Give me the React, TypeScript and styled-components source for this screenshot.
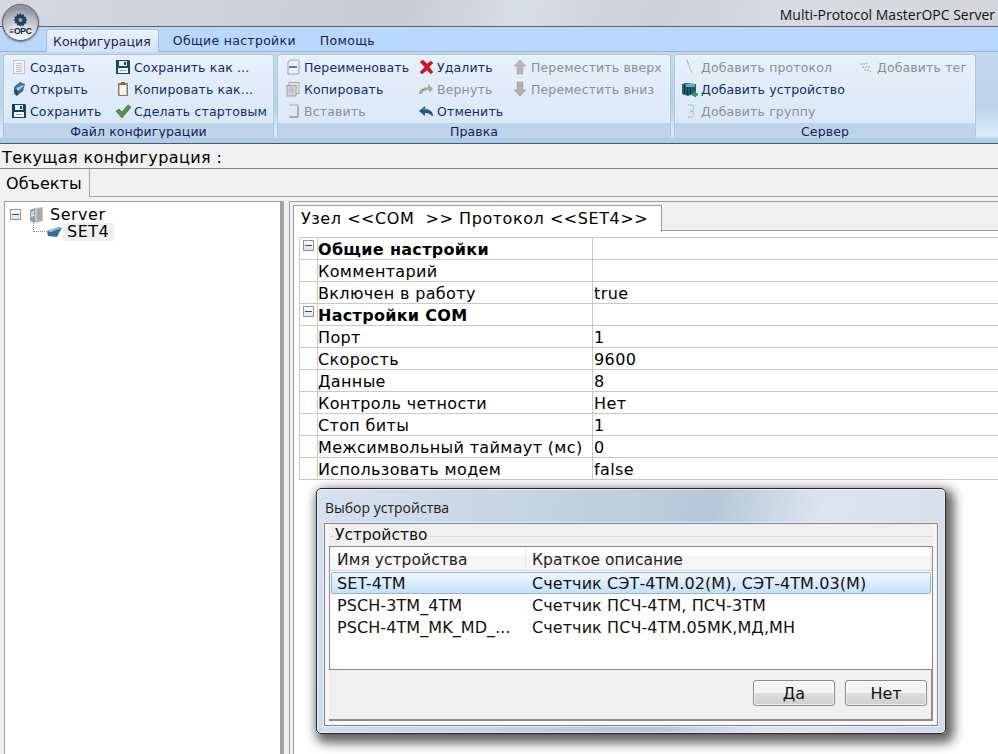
import React from "react";
import styled, { createGlobalStyle } from "styled-components";

const Global = createGlobalStyle`
  html, body { margin: 0; padding: 0; width: 998px; height: 754px; overflow: hidden; background: #f0f0f0; }
  #root { width: 998px; height: 754px; }
  * { box-sizing: border-box; }
`;

const FONT = `"DejaVu Sans", Verdana, sans-serif`;

const Page = styled.div`
  position: relative; width: 998px; height: 754px; overflow: hidden;
  display: flex; flex-direction: column; font-family: ${FONT}; color: #000;
`;
const TitleBar = styled.div`
  height: 27px; flex: none; display: flex; align-items: center; justify-content: flex-end; padding: 2px 3px 0 0;
  background: linear-gradient(105deg, #d6d9df 0%, #c9ccd2 40%, #d9dde4 52%, #cdd0d6 66%, #d8dbe1 78%, #d3d5da 100%);
  border-bottom: 1px solid #5d6068;
`;
const TitleText = styled.span`
  font-family: "Open Sans", sans-serif; font-size: 14px; color: #111; letter-spacing: 0;
`;
const Logo = styled.div`
  position: absolute; left: 2px; top: 4px; width: 37px; height: 37px; border-radius: 50%;
  background: radial-gradient(circle at 50% 100%, #ffffff 0%, #e6e9ee 30%, #b3b9c4 62%, #8b93a0 82%, #b9bec8 100%);
  border: 1px solid #59606b; box-shadow: 0 1px 2px rgba(0,0,0,.45);
  display: flex; flex-direction: column; align-items: center; padding-top: 8px; z-index: 3;
`;
const LogoText = styled.span`
  font-family: "Liberation Sans", sans-serif; font-weight: 700; font-size: 8.5px; line-height: 8px; color: #0d1a2c; letter-spacing: -.2px; margin-top: 0;
`;
const TabBar = styled.div`
  height: 25px; flex: none; display: flex; align-items: flex-end; padding-left: 46px;
  background: #bad7fc; border-bottom: 1px solid #8fb2d6;
`;
const RibbonTab = styled.div<{ $active?: boolean; $gap: number }>`
  height: ${p => (p.$active ? "23px" : "22px")}; display: flex; align-items: center;
  padding: 1px 7px 0 ${p => (p.$active ? "6px" : "7px")}; margin-right: ${p => p.$gap}px; font-size: 12.5px; color: #15234f; letter-spacing: ${p => (p.$active ? ".05px" : ".3px")};
  ${p => p.$active ? `
    background: linear-gradient(#e9f2fd, #d3e3f6); border: 1px solid #9fc2e6; border-bottom: none;
    border-radius: 3px 3px 0 0; margin-bottom: -1px; color: #1b2350; box-shadow: inset 0 1px 0 #fff;
  ` : ""}
`;
const RibbonBody = styled.div`
  height: 92px; flex: none; display: flex; gap: 3px; padding: 2px 0 0 3px;
  background: linear-gradient(#c5d9ef 0%, #bdd3ea 60%, #dcedfb 92%, #a9cfe9 96%, #a9cfe9 100%);
  border-bottom: 1px solid #55585e;
`;
const Group = styled.div<{ $w: number }>`
  width: ${p => p.$w}px; height: 85px; display: flex; flex-direction: column; overflow: hidden;
  border: 1px solid #a8c6e4; border-radius: 3px;
  background: linear-gradient(#e7f0fb, #d7e6f6);
  box-shadow: inset 0 0 0 1px rgba(255,255,255,.35);
`;
const GroupGrid = styled.div<{ $cols: string }>`
  flex: 1; display: grid; grid-template-columns: ${p => p.$cols}; grid-template-rows: repeat(3, 22px);
  grid-auto-flow: column; padding: 1px 0 0 7px;
`;
const Item = styled.div<{ $off?: boolean }>`
  display: flex; align-items: center; gap: 3px; font-size: 12.5px; letter-spacing: .14px; white-space: nowrap;
  color: ${p => (p.$off ? "#8c8f94" : "#142a6c")};
`;
const GroupLabel = styled.div`
  height: 15px; flex: none; background: #bdd4ec; display: flex; align-items: center; justify-content: center; padding-top: 1px;
  font-size: 12.5px; letter-spacing: .1px; color: #12224f;
`;
const IconBox = styled.svg`
  width: 16px; height: 16px; flex: none; display: block;
`;
const CurrentRow = styled.div`
  height: 25px; flex: none; display: flex; align-items: center; padding: 2px 0 0 2px;
  font-size: 16px; letter-spacing: .4px; background: #f0f0f0; border-bottom: 1px solid #82868c;
`;
const OuterTabs = styled.div`
  height: 28px; flex: none; display: flex; align-items: flex-end; background: #f0f0f0; border-bottom: 1px solid #a3a3a3;
`;
const OuterTab = styled.div`
  width: 90px; height: 28px; padding: 1px 0 0 6px; display: flex; align-items: center; font-size: 16px; letter-spacing: .05px;
  background: #f1f1f1; border-right: 1px solid #a3a3a3; margin-bottom: -1px;
`;
const Main = styled.div`
  flex: 1; min-height: 0; display: flex; padding: 4px 0 0 4px; background: #f0f0f0;
`;
const TreePanel = styled.div`
  width: 278px; flex: none; background: #fff; border: 1px solid #a0a0a0; border-bottom: none; border-right-width: 2px;
  padding: 4px 0 0 5px;
`;
const TreeRow = styled.div<{ $indent?: number }>`
  height: 17px; display: flex; align-items: center; padding-left: ${p => p.$indent ?? 0}px;
`;
const Expander = styled.span`
  width: 11px; height: 11px; flex: none; border: 1px solid #8f949b; display: flex; align-items: center; justify-content: center;
  background: linear-gradient(#fff, #dfe3e8);
  &::after { content: ""; width: 7px; height: 1px; background: #2a4a85; }
`;
const TreeSpacer = styled.span`
  width: 8px; flex: none;
`;
const TreeText = styled.span<{ $sel?: boolean }>`
  font-size: 16px; line-height: 18px; height: 18px; letter-spacing: .5px; padding: 0 ${p => (p.$sel ? "5px" : "2px")} 0 ${p => (p.$sel ? "4px" : "6px")};
  background: ${p => (p.$sel ? "#f0f0f0" : "transparent")};
`;
const Connector = styled.span`
  width: 12px; height: 9px; flex: none; margin: -8px 1px 0 0; border-left: 1px dotted #8a8a8a; border-bottom: 1px dotted #8a8a8a;
`;
const Splitter = styled.div`
  width: 7px; flex: none; background: #f0f0f0; border-left: 2px solid #a7a7a7;
`;
const RightPanel = styled.div`
  flex: 1; min-width: 0; border-left: 1px solid #a0a0a0; border-top: 1px solid #a0a0a0; padding: 0 0 0 3px; background: #f0f0f0;
  display: flex; flex-direction: column;
`;
const NodeTabs = styled.div`
  height: 29px; flex: none; display: flex; align-items: flex-end; padding-top: 1px;
`;
const NodeTab = styled.div`
  width: 369px; height: 27px; display: flex; align-items: center; padding: 0 0 2px 7px; background: #fff; font-size: 16px;
  letter-spacing: .55px; white-space: pre; border: 1px solid #9c9c9c; border-bottom: none; position: relative; margin-bottom: -1px;
`;
const NodeRest = styled.div`
  flex: 1; height: 1px; background: #9c9c9c;
`;
const NodePage = styled.div`
  flex: 1; background: #fff; border-left: 1px solid #9c9c9c; padding: 6px 0 0 5px;
`;
const GridTable = styled.div`
  display: grid; grid-template-columns: 17px 276px 1fr; border-top: 1px solid #c9c9c9; border-left: 1px solid #c9c9c9;
`;
const Gutter = styled.div`
  height: 22px; border-bottom: 1px solid #c9c9c9; display: flex; justify-content: center; padding-top: 2px; background: #fff;
`;
const NameCell = styled.div<{ $bold?: boolean }>`
  height: 22px; display: flex; align-items: center; padding: 1px 0 0 0; font-size: 16px; letter-spacing: ${p => (p.$bold ? ".3px" : ".35px")}; white-space: nowrap;
  font-weight: ${p => (p.$bold ? 700 : 400)}; border-left: 1px solid #c9c9c9; border-bottom: 1px solid #c9c9c9; border-right: 1px solid #c9c9c9;
`;
const ValueCell = styled.div`
  height: 22px; display: flex; align-items: center; padding: 1px 0 0 1px; font-size: 16px; letter-spacing: .4px; border-bottom: 1px solid #c9c9c9;
`;
const Dialog = styled.div`
  position: absolute; left: 316px; top: 488px; width: 630px; height: 246px; z-index: 5; padding: 0 7px 7px;
  border-radius: 5px; border: 1px solid #23262b; display: flex; flex-direction: column;
  background: linear-gradient(105deg, #d6e2ee 0%, #c6d5e4 30%, #b6c8d8 58%, #dce6f0 74%, #d0dce8 100%);
  box-shadow: 4px 5px 11px 4px rgba(0,0,0,.62), inset 0 0 0 1px rgba(255,255,255,.55);
`;
const DialogTitle = styled.div`
  height: 34px; flex: none; display: flex; align-items: center; padding: 2px 0 0 1px;
  font-family: "Open Sans", sans-serif; font-size: 14px; color: #1c1c1c;
`;
const DialogClient = styled.div`
  flex: 1; min-height: 0; background: #f7f7f7; border: 1px solid #7f8489; padding: 0 4px 4px 4px;
  display: flex; flex-direction: column; box-shadow: 0 0 0 1px rgba(255,255,255,.5);
`;
const DialogInner = styled.div`
  flex: 1; min-height: 0; display: flex; flex-direction: column; background: #f0f0f0;
  border-bottom: 2px solid #8c8c8c;
`;
const FieldSet = styled.div`
  position: relative; height: 134px; flex: none; border-top: 1px solid #dcdcdc; border-radius: 2px; padding: 9px 0 0 0; margin-top: 12px;
`;
const Legend = styled.span`
  position: absolute; left: 5px; top: -11px; padding: 0 1px; font-size: 15.5px; line-height: 18px; background: #f0f0f0; color: #111;
`;
const ListBox = styled.div`
  height: 124px; background: #fff; border: 1px solid #828790; display: flex; flex-direction: column;
`;
const ListHead = styled.div`
  height: 24px; flex: none; display: grid; grid-template-columns: 195px 1fr; padding: 0 1px; margin-bottom: 1px;
  background: linear-gradient(#fff 0 40%, #f5f6f7 40% 100%); border-bottom: 1px solid #d5d5d5;
`;
const HeadCell = styled.div`
  display: flex; align-items: center; padding: 3px 0 0 6px; font-size: 15.5px; letter-spacing: .05px; color: #222; border-right: 1px solid #e3e4e6;
`;
const ListRow = styled.div<{ $sel?: boolean }>`
  height: 22px; margin: 0 1px; display: grid; grid-template-columns: 195px 1fr; align-items: center; flex: none; border-radius: 2px;
  ${p => p.$sel ? `background: linear-gradient(#f1f8fe, #c4dffb); box-shadow: inset 0 0 0 1px #8db6e4;` : ""}
`;
const ListCell = styled.div`
  padding-left: 6px; font-size: 16px; letter-spacing: .08px; white-space: nowrap; color: #111;
`;
const DialogFoot = styled.div`
  flex: 1; display: flex; justify-content: flex-end; gap: 10px; padding: 10px 4px 0 0; border-right: 2px solid #8c8c8c;
`;
const Btn = styled.div`
  width: 82px; height: 26px; display: flex; align-items: center; justify-content: center; font-size: 16px; color: #111;
  border: 1px solid #8a8a8a; border-radius: 3px; background: linear-gradient(#f3f3f3 0 48%, #dcdcdc 52%, #cfcfcf 100%);
  box-shadow: inset 0 0 0 1px rgba(255,255,255,.7);
`;

type IconName = "create"|"open"|"save"|"saveas"|"clip"|"check"|"rename"|"copy"|"paste"|"del"|"redo"|"undo"|"up"|"down"|"proto"|"tag"|"device"|"group";

const Floppy = ({ body }: { body: string }) => (
  <>
    <path d="M1 1h13l1 1v13H1z" fill={body}/>
    <rect x="4" y="2" width="8" height="5" fill="#e6ecf0"/>
    <rect x="9" y="3" width="2" height="3" fill={body}/>
    <rect x="3" y="9" width="10" height="5" fill="#f5f5f5"/>
    <rect x="5" y="11" width="6" height="1" fill="#9aa6ad"/>
    <rect x="1" y="14" width="14" height="1" fill={body}/>
  </>
);

const Icon = ({ n }: { n: IconName }) => {
  const c: Record<IconName, React.ReactNode> = {
    create: <><rect x="2.5" y="1.5" width="11" height="13" fill="#f1f3f4" stroke="#c2c6c7"/><path d="M5 4.5h6M5 6.5h6M5 8.5h6M5 10.5h6M5 12.5h6" stroke="#bcc4c2"/></>,
    open: <><path d="M3 6l6-5 5 2-2 7-6 5-3-2z" fill="#3c6f94"/><path d="M5 7l7-3 1 1-6 5z" fill="#9cc8e2"/><path d="M3 9l3 6 1-5z" fill="#25445e"/></>,
    save: <Floppy body="#14405f"/>,
    saveas: <Floppy body="#174764"/>,
    clip: <><rect x="3" y="2" width="10" height="13" rx="1" fill="#9b7450"/><rect x="4.5" y="4" width="7" height="10" fill="#f7f6f2"/><rect x="6" y="1" width="4" height="3" fill="#6e6e6e"/></>,
    check: <><path d="M1 8l3-2 3 3 6-7 3 2-9 11z" fill="#55923f" stroke="#2f6128" strokeWidth=".6"/></>,
    rename: <><path d="M3 3l3-2h7a1 1 0 011 1v12a1 1 0 01-1 1H3z" fill="#eef1f3" stroke="#9ba3a6"/><rect x="4" y="7" width="8" height="2" fill="#3d83b5"/></>,
    copy: <><rect x="4" y="1.5" width="10" height="11" fill="#e2e2e2" stroke="#a8a8a8"/><rect x="2" y="4.5" width="9" height="10.5" fill="#d5d5d5" stroke="#a0a0a0"/><path d="M4 7h5M4 9h5M4 11h5" stroke="#b0b0b0"/></>,
    paste: <><path d="M4 2h9v12H4" fill="none" stroke="#bfbfbf" strokeWidth="1.5"/><path d="M5 14h8M13 3v11" stroke="#a5a5a5" strokeWidth="1.5"/></>,
    del: <><path d="M2 3l3-2 4 4 4-3 2 2-4 4 4 5-2 2-4-4-5 4-2-2 5-5z" fill="#d9101a" stroke="#8a0d12" strokeWidth=".4"/></>,
    redo: <><path d="M1 13c0-5 4-7 9-7V3l5 5-4 4V9c-4 0-6 1-7 4z" fill="#a6a6a6"/><path d="M3 9c2-2 4-2 7-2" stroke="#e8e8e8"/></>,
    undo: <><path d="M15 13c0-5-4-7-8-7V3L1 8l6 5V10c4 0 5 1 7 3z" fill="#1e5a86"/><path d="M5 6h4" stroke="#58a0c8"/></>,
    up: <><path d="M8 1l6 6h-3v8H5V7H2z" fill="#b8b8b8" stroke="#9a9a9a" strokeWidth=".5"/></>,
    down: <><path d="M8 15l6-6h-3V1H5v8H2z" fill="#b0b0b0" stroke="#8f8f8f" strokeWidth=".5"/></>,
    proto: <><path d="M5 1l2 5 1 5 3 3" fill="none" stroke="#9a9a9a" strokeDasharray="1.5 1"/><path d="M5 2l1 4" stroke="#c6c6c6"/></>,
    tag: <><path d="M2 5h6l2-2M4 8h9M6 11h5l2 2" fill="none" stroke="#a5a5a5" strokeDasharray="2 1"/></>,
    device: <><path d="M0 3l4-1 10 1v9l-8 3-6-2z" fill="#1d5f78"/><path d="M4 3h9v3H4z" fill="#6aaac0"/><path d="M2.5 5v8M5.5 6v8M8.5 6v7" stroke="#0c2f3f"/><path d="M10 13.5h6M13 10.5v6" stroke="#2e9b58" strokeWidth="2.4"/></>,
    group: <><path d="M6 2h5l1 3-2 3 2 3-2 3H6" fill="none" stroke="#a0a0a0" strokeDasharray="1.5 1.2"/><path d="M8 8h4" stroke="#bbb"/></>,
  };
  return <IconBox viewBox="0 0 16 16">{c[n]}</IconBox>;
};

const Gear = () => (
  <svg width="15" height="14" viewBox="0 0 16 15">
    <path d="M8 0l1.2 2.2 2.3-.8.4 2.4 2.4.4-.8 2.3L16 7.5l-2.2 1.2.8 2.3-2.4.4-.4 2.4-2.3-.8L8 15l-1.2-2.2-2.3.8-.4-2.4-2.4-.4.8-2.3L0 7.5l2.2-1.2-.8-2.3 2.4-.4.4-2.4 2.3.8z" fill="#22405f"/>
    <circle cx="8" cy="7.5" r="2.2" fill="#8ea7bd"/>
  </svg>
);
const ServerIcon = () => (
  <svg width="15" height="18" viewBox="0 0 15 18"><path d="M1 4l5-2v15l-5-2z" fill="#88a0ae"/><path d="M6 2l8-1v14l-8 2z" fill="#c9c9c9"/><path d="M2 6l3-1v2l-3 1zM2 9l3-1v2l-3 1z" fill="#e6eef2"/><path d="M8 3l5-1v13l-5 1z" fill="#a8a8a8"/></svg>
);
const SetIcon = () => (
  <svg width="17" height="12" viewBox="0 0 17 12"><path d="M1 5l12-4 3 1-2 3-3 6-9-1z" fill="#2d6f96"/><path d="M1 5l12-4 3 1-11 4z" fill="#8fc0dc"/></svg>
);

const groups: { w: number; cols: string; label: string; items: [IconName, string, boolean?][] }[] = [
  { w: 271, cols: "104px 1fr", label: "Файл конфигурации", items: [
    ["create", "Создать"], ["open", "Открыть"], ["save", "Сохранить"],
    ["saveas", "Сохранить как ..."], ["clip", "Копировать как..."], ["check", "Сделать стартовым"],
  ]},
  { w: 394, cols: "133px 94px 1fr", label: "Правка", items: [
    ["rename", "Переименовать"], ["copy", "Копировать"], ["paste", "Вставить", true],
    ["del", "Удалить"], ["redo", "Вернуть", true], ["undo", "Отменить"],
    ["up", "Переместить вверх", true], ["down", "Переместить вниз", true],
  ]},
  { w: 302, cols: "176px 1fr", label: "Сервер", items: [
    ["proto", "Добавить протокол", true], ["device", "Добавить устройство"], ["group", "Добавить группу", true],
    ["tag", "Добавить тег", true],
  ]},
];

const props: [string, string, boolean?][] = [
  ["Общие настройки", "", true], ["Комментарий", ""], ["Включен в работу", "true"],
  ["Настройки COM", "", true], ["Порт", "1"], ["Скорость", "9600"], ["Данные", "8"],
  ["Контроль четности", "Нет"], ["Стоп биты", "1"], ["Межсимвольный таймаут (мс)", "0"], ["Использовать модем", "false"],
];

const devices = [
  ["SET-4TM", "Счетчик СЭТ-4ТМ.02(М), СЭТ-4ТМ.03(М)"],
  ["PSCH-3TM_4TM", "Счетчик ПСЧ-4ТМ, ПСЧ-3ТМ"],
  ["PSCH-4TM_MK_MD_...", "Счетчик ПСЧ-4ТМ.05МК,МД,МН"],
];

export default function App() {
  return (
    <Page>
      <Global />
      <TitleBar><TitleText>Multi-Protocol MasterOPC Server</TitleText></TitleBar>
      <Logo><Gear /><LogoText>≡OPC</LogoText></Logo>
      <TabBar>
        <RibbonTab $active $gap={7}>Конфигурация</RibbonTab>
        <RibbonTab $gap={10}>Общие настройки</RibbonTab>
        <RibbonTab $gap={0}>Помощь</RibbonTab>
      </TabBar>
      <RibbonBody>
        {groups.map(g => (
          <Group key={g.label} $w={g.w}>
            <GroupGrid $cols={g.cols}>
              {g.items.map(([ic, t, off]) => (
                <Item key={t} $off={off}><Icon n={ic} />{t}</Item>
              ))}
            </GroupGrid>
            <GroupLabel>{g.label}</GroupLabel>
          </Group>
        ))}
      </RibbonBody>
      <CurrentRow>Текущая конфигурация :</CurrentRow>
      <OuterTabs><OuterTab>Объекты</OuterTab></OuterTabs>
      <Main>
        <TreePanel>
          <TreeRow><Expander /><TreeSpacer /><ServerIcon /><TreeText>Server</TreeText></TreeRow>
          <TreeRow $indent={23}><Connector /><SetIcon /><TreeText $sel>SET4</TreeText></TreeRow>
        </TreePanel>
        <Splitter />
        <RightPanel>
          <NodeTabs><NodeTab>{"Узел <<COM  >> Протокол <<SET4>>"}</NodeTab><NodeRest /></NodeTabs>
          <NodePage>
            <GridTable>
              {props.map(([n, v, b]) => (
                <React.Fragment key={n}>
                  <Gutter>{b ? <Expander /> : null}</Gutter>
                  <NameCell $bold={b}>{n}</NameCell>
                  <ValueCell>{v}</ValueCell>
                </React.Fragment>
              ))}
            </GridTable>
          </NodePage>
        </RightPanel>
      </Main>
      <Dialog>
        <DialogTitle>Выбор устройства</DialogTitle>
        <DialogClient>
          <DialogInner>
            <FieldSet>
              <Legend>Устройство</Legend>
              <ListBox>
                <ListHead><HeadCell>Имя устройства</HeadCell><HeadCell>Краткое описание</HeadCell></ListHead>
                {devices.map(([a, b], i) => (
                  <ListRow key={a} $sel={i === 0}><ListCell>{a}</ListCell><ListCell>{b}</ListCell></ListRow>
                ))}
              </ListBox>
            </FieldSet>
            <DialogFoot><Btn>Да</Btn><Btn>Нет</Btn></DialogFoot>
          </DialogInner>
        </DialogClient>
      </Dialog>
    </Page>
  );
}
